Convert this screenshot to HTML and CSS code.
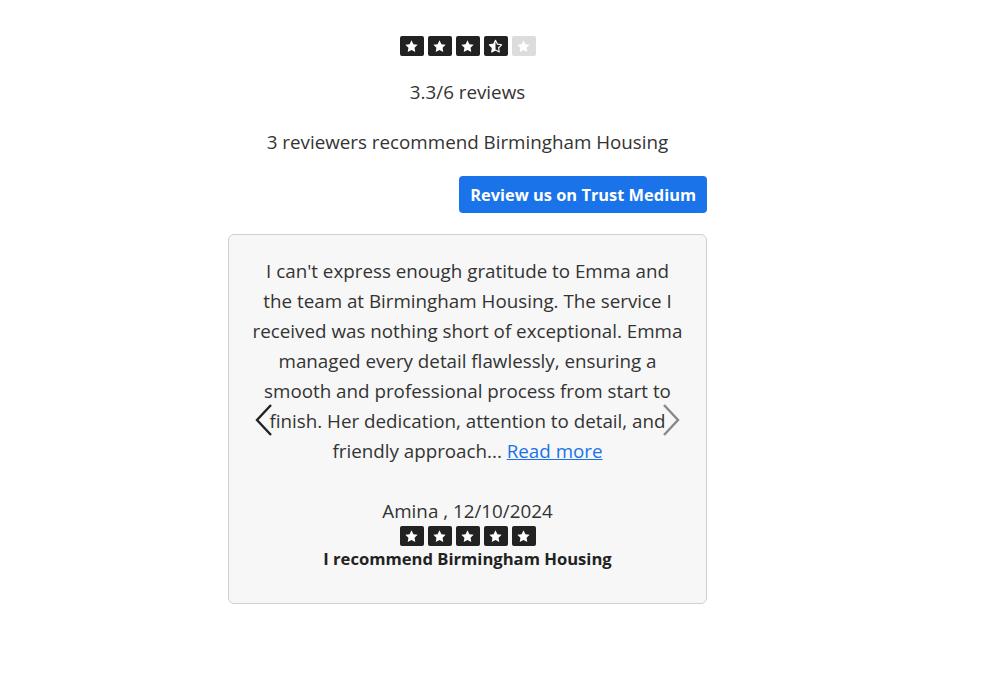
FILE: index.html
```html
<!DOCTYPE html>
<html lang="en">
<head>
  <meta charset="UTF-8" />
  <meta name="viewport" content="width=device-width, initial-scale=1.0" />
  <title>Birmingham Housing Reviews</title>
  <link rel="stylesheet" href="styles.css">
</head>
<body>
  <svg width="0" height="0" class="defs">
    <defs>
      <symbol id="star" viewBox="0 0 24 24">
        <path d="M12 3.2l2.7 5.5 6 .9-4.35 4.2 1 6-5.35-2.85-5.35 2.85 1-6L3.3 9.6l6-.9z" fill="#fff"/>
      </symbol>
      <symbol id="star-half" viewBox="0 0 24 24">
        <path d="M12 3.2l2.7 5.5 6 .9-4.35 4.2 1 6-5.35-2.85-5.35 2.85 1-6L3.3 9.6l6-.9z" fill="none" stroke="#fff" stroke-width="1.6" stroke-linejoin="round"/>
        <path d="M12 3.2v13.75l-5.35 2.85 1-6L3.3 9.6l6-.9z" fill="#fff"/>
      </symbol>
    </defs>
  </svg>

  <div class="wrap">
    <!-- Summary -->
    <div class="summary">
      <div class="stars">
        <span class="star"><svg><use href="#star"/></svg></span>
        <span class="star"><svg><use href="#star"/></svg></span>
        <span class="star"><svg><use href="#star"/></svg></span>
        <span class="star"><svg><use href="#star-half"/></svg></span>
        <span class="star empty"><svg><use href="#star"/></svg></span>
      </div>
      <p class="score">3.3/6 reviews</p>
      <p class="recommend">3 reviewers recommend Birmingham Housing</p>
    </div>

    <div class="actions">
      <a class="review-btn" href="#">Review us on Trust Medium</a>
    </div>

    <!-- Carousel card -->
    <div class="card">
      <button class="arrow prev" aria-label="Previous">
        <svg viewBox="0 0 20 34"><path d="M17 2L3 17l14 15" fill="none" stroke="currentColor" stroke-width="2.4"/></svg>
      </button>
      <p class="review-text">I can't express enough gratitude to Emma and the team at Birmingham Housing. The service I received was nothing short of exceptional. Emma managed every detail flawlessly, ensuring a smooth and professional process from start to finish. Her dedication, attention to detail, and friendly approach... <a href="#">Read more</a></p>
      <div class="author">Amina , 12/10/2024</div>
      <div class="stars">
        <span class="star"><svg><use href="#star"/></svg></span>
        <span class="star"><svg><use href="#star"/></svg></span>
        <span class="star"><svg><use href="#star"/></svg></span>
        <span class="star"><svg><use href="#star"/></svg></span>
        <span class="star"><svg><use href="#star"/></svg></span>
      </div>
      <div class="verdict">I recommend Birmingham Housing</div>
      <button class="arrow next" aria-label="Next">
        <svg viewBox="0 0 20 34"><path d="M3 2l14 15L3 32" fill="none" stroke="currentColor" stroke-width="2.4"/></svg>
      </button>
    </div>
  </div>
</body>
</html>
```

FILE: styles.css
```css
* {
  margin: 0;
  padding: 0;
  box-sizing: border-box;
}
body {
  font-family: 'Open Sans', 'Noto Sans', sans-serif;
  color: #333;
  background: #fff;
}
.defs {
  position: absolute;
}
.wrap {
  width: 479px;
  margin-left: 228px;
  padding-top: 36px;
}
/* Stars */
.stars {
  display: flex;
  justify-content: center;
  gap: 4px;
}
.star {
  width: 24px;
  height: 20px;
  background: #222;
  border-radius: 2px;
  display: flex;
  align-items: center;
  justify-content: center;
}
.star svg {
  width: 17px;
  height: 17px;
}
.star.empty {
  background: #dcdcdc;
}
/* Summary */
.summary {
  text-align: center;
}
.score {
  font-size: 18.8px;
  line-height: 24px;
  margin-top: 24px;
}
.recommend {
  font-size: 18.8px;
  line-height: 24px;
  margin-top: 26px;
}
.actions {
  display: flex;
  justify-content: flex-end;
  margin-top: 22px;
}
.review-btn {
  display: inline-block;
  background: #1a73e8;
  color: #fff;
  font-weight: 700;
  font-size: 16.4px;
  line-height: 37px;
  padding: 0 11px;
  border-radius: 4px;
  text-decoration: none;
}
/* Card */
.card {
  position: relative;
  margin-top: 21px;
  background: #f7f7f7;
  border: 1px solid #d0d0d0;
  border-radius: 6px;
  padding: 21px 22px 33px;
  text-align: center;
}
.review-text {
  font-size: 18.8px;
  line-height: 30px;
}
.review-text a {
  color: #1a73e8;
}
.author {
  font-size: 18.8px;
  line-height: 24px;
  margin-top: 33px;
}
.card .stars {
  margin-top: 3px;
}
.verdict {
  font-size: 16.6px;
  font-weight: 700;
  line-height: 22px;
  color: #222;
  margin-top: 2px;
}
.arrow {
  position: absolute;
  top: 168px;
  width: 20px;
  height: 34px;
  border: none;
  background: none;
}
.arrow svg {
  width: 20px;
  height: 34px;
  display: block;
}
.prev {
  left: 25px;
  color: #222;
}
.next {
  right: 25px;
  color: #888;
}
```
